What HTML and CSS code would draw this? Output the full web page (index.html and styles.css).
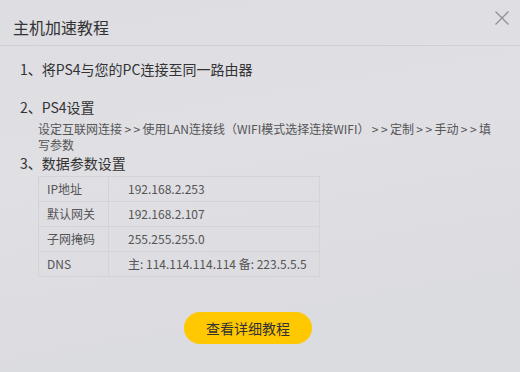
FILE: index.html
```html
<!DOCTYPE html>
<html lang="zh">
<head>
<meta charset="utf-8">
<title>主机加速教程</title>
<link rel="stylesheet" href="styles.css">
</head>
<body>
<div class="dialog">
  <div class="header">
    <span class="title">主机加速教程</span>
    <svg class="close" width="14" height="14" viewBox="0 0 14 14"><path d="M0.5 0.5L13.5 13.5M13.5 0.5L0.5 13.5" stroke="#8e8e92" stroke-width="1.2" fill="none"/></svg>
  </div>
  <div class="content">
    <div class="step step1">1、将PS4与您的PC连接至同一路由器</div>
    <div class="step step2">2、PS4设置</div>
    <div class="desc">设定互联网连接&thinsp;&gt;&thinsp;&gt;&thinsp;使用LAN连接线（WIFI模式选择连接WIFI）&thinsp;&gt;&thinsp;&gt;&thinsp;定制&thinsp;&gt;&thinsp;&gt;&thinsp;手动&thinsp;&gt;&thinsp;&gt;&thinsp;填写参数</div>
    <div class="step step3">3、数据参数设置</div>
    <table class="params">
      <tr><td class="k">IP地址</td><td class="v">192.168.2.253</td></tr>
      <tr><td class="k">默认网关</td><td class="v">192.168.2.107</td></tr>
      <tr><td class="k">子网掩码</td><td class="v">255.255.255.0</td></tr>
      <tr><td class="k">DNS</td><td class="v">主: 114.114.114.114 备: 223.5.5.5</td></tr>
    </table>
    <div class="actions"><button class="btn">查看详细教程</button></div>
  </div>
</div>
</body>
</html>
```
FILE: styles.css
```css
* { box-sizing: border-box; }
html, body { margin: 0; padding: 0; }
body {
  width: 520px;
  height: 372px;
  overflow: hidden;
  background: #dcdce1;
  font-family: "Noto Sans CJK SC", "Noto Sans", sans-serif;
  color: #333;
}
.dialog {
  width: 520px;
  height: 372px;
  background: linear-gradient(170deg, #dddde2 0%, #dfdfe4 40%, #dcdce1 70%, #dadce0 100%);
}
.header {
  height: 46px;
  border-bottom: 1px solid #d0d0d5;
  display: flex;
  justify-content: space-between;
  align-items: flex-start;
  padding: 16px 11px 0 13px;
}
.title {
  font-size: 16px;
  line-height: 22px;
  color: #333;
}
.close { margin-top: -5px; }
.content {
  padding: 13px 0 0 20px;
}
.step {
  font-size: 14px;
  line-height: 20px;
  color: #333;
}
.step2 { margin-top: 18px; }
.desc {
  margin: 4px 0 0 18px;
  width: 460px;
  font-size: 12px;
  line-height: 16px;
  color: #555;
}
.params {
  margin: 3px 0 0 18px;
  border-collapse: collapse;
  font-size: 12px;
  color: #555;
}
.params td {
  border: 1px solid #d3d3d8;
  height: 25px;
  padding: 0;
  line-height: 16px;
}
.params .k { width: 70px; padding-left: 8px; }
.params .v { width: 211px; padding-left: 19px; }
.actions {
  margin-top: 35px;
  padding-left: 164px;
}
.btn {
  width: 128px;
  height: 32px;
  border: none;
  border-radius: 16px;
  background: #ffc800;
  color: #333;
  font-family: inherit;
  font-size: 14px;
  padding: 0;
}
```
